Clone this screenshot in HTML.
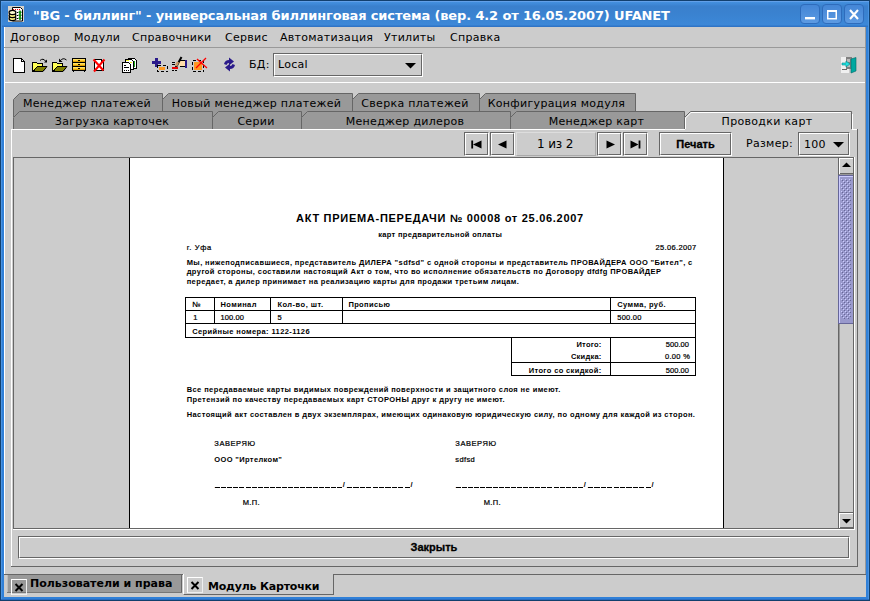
<!DOCTYPE html>
<html lang="ru">
<head>
<meta charset="utf-8">
<title>BG - биллинг</title>
<style>
html,body{margin:0;padding:0;}
body{width:870px;height:601px;overflow:hidden;position:relative;background:#3080d8;font-family:"DejaVu Sans","Liberation Sans",sans-serif;font-size:12px;color:#000;}
body *{position:absolute;box-sizing:border-box;}
.t{white-space:nowrap;line-height:14px;height:14px;font-size:11px;letter-spacing:0.28px;}
.b{font-weight:bold;}
#title{left:0;top:0;width:870px;height:27px;background:linear-gradient(#12406e 0,#12406e 1px,#62a0e8 1px,#62a0e8 2px,#4490de 2px,#3d86d4 5px,#3a80cc 6px,#3a82d0 14px,#3c88d8 25px,#2f74c6 26px,#2f74c6 27px);}
#title .ttl{left:33px;top:8px;font-size:13px;line-height:16px;height:16px;font-weight:bold;color:#fff;letter-spacing:-0.14px;}
.wb{top:4px;width:20px;height:20px;border-radius:4px;background:linear-gradient(#4486d6,#5c9ae2);border:1px solid #2e6cbc;}
#client{left:4px;top:27px;width:862px;height:570px;background:#cccccc;}
.btn{border:1px solid;border-color:#666 #fff #fff #666;background:#ccc;}
.btn::before{content:"";position:absolute;left:0;top:0;right:0;bottom:0;border:1px solid;border-color:#fff #666 #666 #fff;}
.hl{background:#fff;} .dk{background:#666;} .sh{background:#999;}
.tab{height:18px;}
.tab svg{left:0;top:0;}
.tab .t{top:4px;text-align:center;left:0;width:100%;letter-spacing:0.3px;}
#page{left:129px;top:158px;width:595px;height:370px;background:#fff;border-left:1px solid #000;border-right:1px solid #000;font-family:"Liberation Sans",sans-serif;font-weight:bold;font-size:7px;overflow:hidden;}
#page .d{white-space:nowrap;line-height:9px;height:9px;font-size:7.5px;}
#page .ln{background:#000;}
</style>
</head>
<body>

<div id="title"><div class="t ttl">"BG - биллинг" - универсальная биллинговая система (вер. 4.2 от 16.05.2007) UFANET</div>
<div class="wb" style="left:800px"></div>
<div class="wb" style="left:822px"></div>
<div class="wb" style="left:844px"></div>
<svg style="left:800px;top:4px" width="64" height="20" viewBox="0 0 64 20"><rect x="5" y="13" width="10" height="2.4" fill="#fff"/><rect x="27.75" y="7.25" width="8.5" height="7.5" fill="none" stroke="#fff" stroke-width="1.5"/><rect x="27" y="6" width="10" height="2" fill="#fff"/><path d="M50 6 L58 15 M58 6 L50 15" stroke="#fff" stroke-width="2.1" fill="none"/></svg>
</div>
<svg style="left:8px;top:6px" width="16" height="16" viewBox="0 0 16 16"><rect x="0" y="0" width="16" height="16" fill="#d6d2ca"/><path d="M4.5 1.5h8l2 2v11.5h-10z" fill="#fff" stroke="#000" stroke-width="1"/><rect x="5" y="3" width="1" height="1" fill="#f00"/><rect x="7" y="3" width="1" height="1" fill="#f00"/><rect x="9" y="3" width="1" height="1" fill="#f00"/><rect x="11" y="3" width="1" height="1" fill="#f00"/><rect x="9" y="6" width="1" height="1" fill="#000"/><rect x="9" y="9" width="1" height="1" fill="#000"/><rect x="9" y="12" width="1" height="1" fill="#000"/><path d="M12 4.5l1.5 1.7L12 8l-1.5-1.8zM12 7.5l1.5 1.7L12 11l-1.5-1.8zM12 10.500l1.500 1.700L12 14l-1.500-1.800z" fill="#0a0" stroke="#040" stroke-width="0.5"/><ellipse cx="4.500" cy="12.500" rx="3.400" ry="2.200" fill="#f4f080" stroke="#000" stroke-width="1.200"/><ellipse cx="4.500" cy="9.500" rx="3.400" ry="2.200" fill="#f4f080" stroke="#000" stroke-width="1.200"/><ellipse cx="4.500" cy="6.500" rx="3.400" ry="2.200" fill="#fbfbd0" stroke="#000" stroke-width="1.200"/></svg>
<div id="client"></div>
<div style="left:0;top:1px;width:1px;height:600px;background:#12406e"></div><div style="left:1px;top:2px;width:1px;height:598px;background:#4a94e2"></div><div style="left:869px;top:1px;width:1px;height:600px;background:#12406e"></div><div style="left:868px;top:2px;width:1px;height:598px;background:#4a94e2"></div><div style="left:0;top:600px;width:870px;height:1px;background:#12406e"></div><div style="left:1px;top:599px;width:868px;height:1px;background:#2a6cc0"></div>
<div class="hl" style="left:4px;top:27px;width:1px;height:547px"></div>
<div class="sh" style="left:865px;top:27px;width:1px;height:548px"></div>
<div class="t" style="left:10px;top:31px">Договор</div>
<div class="t" style="left:74px;top:31px">Модули</div>
<div class="t" style="left:132px;top:31px">Справочники</div>
<div class="t" style="left:225px;top:31px">Сервис</div>
<div class="t" style="left:280px;top:31px">Автоматизация</div>
<div class="t" style="left:384px;top:31px">Утилиты</div>
<div class="t" style="left:450px;top:31px">Справка</div>
<div class="sh" style="left:4px;top:47px;width:862px;height:1px"></div>
<svg style="left:0;top:50px" width="870" height="30" viewBox="0 50 870 30" shape-rendering="crispEdges">
<!-- new doc -->
<path d="M13.5 58.5H21.5L24.5 61.5V72.5H13.5Z" fill="#fff" stroke="#000"/>
<path d="M21.5 58.5V61.5H24.5" fill="none" stroke="#000"/>
<!-- open folder 1 -->
<g>
<path d="M32.5 71.5V62.5H36.5L37.5 63.5H42.5V66.5H46.5L42.5 71.5Z" fill="#ffff55" stroke="#000"/>
<path d="M37 67H46L42 71H33Z" fill="#808000" stroke="#000" stroke-width="0"/>
<path d="M33 71.5L37.5 66.5H47" fill="none" stroke="#000"/>
<path d="M32 71.5H43L47 66.5" fill="none" stroke="#000" shape-rendering="auto"/>
</g>
<path d="M40 60.5Q43 57.5 46 61.5" fill="none" stroke="#000" shape-rendering="auto"/>
<path d="M44 62.5H47V59.5Z" fill="#000" shape-rendering="auto"/>
<!-- open folder 2 -->
<g transform="translate(20 0)">
<path d="M32.5 71.5V62.5H36.5L37.5 63.5H42.5V66.5H46.5L42.5 71.5Z" fill="#ffff55" stroke="#000"/>
<path d="M37 67H46L42 71H33Z" fill="#808000" stroke="#000" stroke-width="0"/>
<path d="M33 71.5L37.5 66.5H47" fill="none" stroke="#000"/>
<path d="M32 71.5H43L47 66.5" fill="none" stroke="#000" shape-rendering="auto"/>
</g>
<path d="M66.5 60Q63 57 60 61" fill="none" stroke="#000" shape-rendering="auto"/>
<path d="M59 58.5V62H62.5Z" fill="#000" shape-rendering="auto"/>
<!-- drawers -->
<rect x="72.5" y="58.5" width="13" height="12" fill="#ffcc33" stroke="#000"/>
<rect x="73" y="59" width="12" height="1" fill="#ffe066"/><rect x="73" y="63" width="12" height="1" fill="#ffe066"/><rect x="73" y="67" width="12" height="1" fill="#ffe066"/>
<rect x="73" y="61" width="12" height="1" fill="#e0a000"/><rect x="73" y="65" width="12" height="1" fill="#e0a000"/><rect x="73" y="69" width="12" height="1" fill="#e0a000"/>
<rect x="72" y="62" width="14" height="1" fill="#000"/><rect x="72" y="66" width="14" height="1" fill="#000"/>
<rect x="78" y="60" width="2" height="1" fill="#000"/><rect x="78" y="64" width="2" height="1" fill="#000"/><rect x="78" y="68" width="2" height="1" fill="#000"/>
<rect x="73" y="71" width="1" height="1" fill="#000"/><rect x="84" y="71" width="1" height="1" fill="#000"/>
<!-- doc with red X -->
<path d="M94.5 59.5H101.5L103.5 61.5V70.5H94.5Z" fill="#fff" stroke="#000"/>
<path d="M101.5 59.5V61.5H103.5" fill="none" stroke="#000"/>
<path d="M93.5 59.5L103.5 70.5M104.5 59.5L94 71.5" fill="none" stroke="#f00" stroke-width="2" shape-rendering="auto"/>
<!-- copy docs -->
<path d="M128.5 58.5H134.5L136.5 60.5V68.5H128.5Z" fill="#fff" stroke="#000"/>
<rect x="133" y="61" width="2" height="6" fill="#2a2"/>
<path d="M125.5 59.5H131.5L133.5 61.5V69.5H125.5Z" fill="#fff" stroke="#000"/>
<rect x="126" y="60" width="3" height="1" fill="#ee2"/><rect x="130" y="62" width="2" height="1" fill="#ee2"/>
<path d="M122.5 62.5H128.5L130.5 64.5V72.5H122.5Z" fill="#fff" stroke="#000"/>
<rect x="124" y="65" width="2" height="1" fill="#000"/><rect x="124" y="67" width="5" height="1" fill="#000"/><rect x="124" y="70" width="1" height="1" fill="#000"/><rect x="126" y="70" width="1" height="1" fill="#000"/><rect x="128" y="70" width="1" height="1" fill="#000"/>
<!-- plus -->
<rect x="155" y="58" width="3" height="9" fill="#2a1a8a"/><rect x="152" y="61" width="9" height="3" fill="#2a1a8a"/>
<rect x="157.5" y="65.5" width="10" height="6" fill="none" stroke="#000" stroke-dasharray="3 2"/>
<rect x="159" y="67" width="6" height="3" fill="#ff9922"/>
<!-- hand edit -->
<rect x="185" y="60" width="2" height="8" fill="#2a1a8a"/>
<rect x="179" y="61" width="6" height="5" fill="#ffddaa"/><rect x="179" y="60" width="6" height="1" fill="#000"/><rect x="180" y="66" width="5" height="1" fill="#000"/>
<path d="M181.5 57L175.5 68" stroke="#000" stroke-width="2" shape-rendering="auto"/>
<path d="M178 62L176 66" stroke="#c96" stroke-width="2.5" shape-rendering="auto"/>
<rect x="172" y="67" width="6" height="2" fill="#e00"/>
<rect x="172" y="62" width="3" height="1" fill="#000"/><rect x="172" y="64" width="3" height="1" fill="#000"/><rect x="172" y="70" width="2" height="1" fill="#000"/><rect x="175" y="70" width="2" height="1" fill="#000"/>
<!-- delete rect -->
<rect x="192.5" y="60.5" width="11" height="11" fill="none" stroke="#000" stroke-dasharray="3 2"/>
<rect x="194" y="62" width="8" height="8" fill="#ff9922"/>
<path d="M197 59L207 68M206 58L196 68" stroke="#f00" stroke-width="1.3" fill="none" shape-rendering="auto"/>
<!-- refresh arrows -->
<g fill="#2a1a8a" shape-rendering="auto">
<path d="M224 64Q225 60 229 60V57.5L234 61.5L229 65.5V63Q227 63 226.5 65Z"/>
<path d="M235 65Q234 69 230 69V71.5L225 67.5L230 63.5V66Q232 66 232.5 64Z"/>
</g>
<!-- exit -->
<rect x="841" y="57" width="8" height="16" fill="#f0f0f0"/>
<path d="M846 57H852V69H846Z" fill="#808080"/>
<rect x="847" y="59" width="3" height="3" fill="#bbb"/><rect x="847" y="64" width="3" height="3" fill="#bbb"/>
<path d="M851 59L856 57.5V71L851 73Z" fill="#00a8a0" shape-rendering="auto"/>
<path d="M851 59L856 57.5V71L851 73Z" fill="none" stroke="#066" stroke-width="0.6" shape-rendering="auto"/>
<path d="M842 63H846V61L850 64L846 67V65H842Z" fill="#22e0e0" stroke="#088" stroke-width="0.6" shape-rendering="auto"/>
<rect x="842" y="69" width="5" height="1" fill="#666"/>
</svg>

<div class="t" style="left:249px;top:58px">БД:</div>
<div class="btn" style="left:273px;top:53px;width:150px;height:24px"><div class="t" style="left:4px;top:4px">Local</div><svg style="left:131px;top:9px" width="12" height="6"><path d="M0 0h11l-5.5 5.5z" fill="#000"/></svg></div>
<div class="hl" style="left:5px;top:82px;width:860px;height:1px"></div>
<div class="dk" style="left:4px;top:574px;width:862px;height:1px"></div>
<div class="tab" style="left:13px;top:93px;width:150px;height:24px"><svg width="150" height="24" viewBox="0 0 150 24"><path d="M0.5 24 V6.5 L6.5 0.5 H149.5 V24" fill="#999" stroke="#666" stroke-width="1"/></svg><div class="t" style="left:-1px">Менеджер платежей</div></div>
<div class="tab" style="left:162px;top:93px;width:191px;height:24px"><svg width="191" height="24" viewBox="0 0 191 24"><path d="M0.5 24 V6.5 L6.5 0.5 H190.5 V24" fill="#999" stroke="#666" stroke-width="1"/></svg><div class="t" style="left:-1px">Новый менеджер платежей</div></div>
<div class="tab" style="left:352px;top:93px;width:128px;height:24px"><svg width="128" height="24" viewBox="0 0 128 24"><path d="M0.5 24 V6.5 L6.5 0.5 H127.5 V24" fill="#999" stroke="#666" stroke-width="1"/></svg><div class="t" style="left:-1px">Сверка платежей</div></div>
<div class="tab" style="left:479px;top:93px;width:157px;height:24px"><svg width="157" height="24" viewBox="0 0 157 24"><path d="M0.5 24 V6.5 L6.5 0.5 H156.5 V24" fill="#999" stroke="#666" stroke-width="1"/></svg><div class="t" style="left:-1px">Конфигурация модуля</div></div>
<div class="tab" style="left:13px;top:111px;width:200px;height:18px"><svg width="200" height="18" viewBox="0 0 200 18"><path d="M0.5 18 V6.5 L6.5 0.5 H199.5 V18" fill="#999" stroke="#666" stroke-width="1"/></svg><div class="t" style="left:-1px">Загрузка карточек</div></div>
<div class="tab" style="left:212px;top:111px;width:90px;height:18px"><svg width="90" height="18" viewBox="0 0 90 18"><path d="M0.5 18 V6.5 L6.5 0.5 H89.5 V18" fill="#999" stroke="#666" stroke-width="1"/></svg><div class="t" style="left:-1px">Серии</div></div>
<div class="tab" style="left:301px;top:111px;width:210px;height:18px"><svg width="210" height="18" viewBox="0 0 210 18"><path d="M0.5 18 V6.5 L6.5 0.5 H209.5 V18" fill="#999" stroke="#666" stroke-width="1"/></svg><div class="t" style="left:-1px">Менеджер дилеров</div></div>
<div class="tab" style="left:510px;top:111px;width:175px;height:18px"><svg width="175" height="18" viewBox="0 0 175 18"><path d="M0.5 18 V6.5 L6.5 0.5 H174.5 V18" fill="#999" stroke="#666" stroke-width="1"/></svg><div class="t" style="left:-1px">Менеджер карт</div></div>
<div class="tab" style="left:684px;top:111px;width:168px;height:18px"><svg width="168" height="18" viewBox="0 0 168 18"><path d="M0.5 18 V6.5 L6.5 0.5 H167.5 V18" fill="#ccc" stroke="#666" stroke-width="1"/><path d="M1.5 18 V7 L7 1.5 H166.5" fill="none" stroke="#fff" stroke-width="1"/></svg><div class="t" style="left:-1px">Проводки карт</div></div>
<div class="hl" style="left:852px;top:114px;width:1px;height:16px"></div>
<div class="hl" style="left:11px;top:129px;width:674px;height:1px"></div>
<div class="hl" style="left:852px;top:129px;width:5px;height:1px"></div>
<div class="hl" style="left:11px;top:129px;width:1px;height:437px"></div>
<div class="dk" style="left:857px;top:129px;width:1px;height:438px"></div>
<div class="dk" style="left:11px;top:566px;width:847px;height:1px"></div>
<div class="btn" style="left:464px;top:132px;width:25px;height:24px"></div>
<div class="btn" style="left:490px;top:132px;width:25px;height:24px"></div>
<div class="btn" style="left:597px;top:132px;width:25px;height:24px"></div>
<div class="btn" style="left:623px;top:132px;width:25px;height:24px"></div>
<svg style="left:460px;top:132px" width="200" height="24" viewBox="460 132 200 24"><rect x="471.3" y="140.5" width="1.8" height="8" fill="#000"/><path d="M481.5 140.5v8l-8.5-4z" fill="#000"/><path d="M506.5 140.5v8l-8.5-4z" fill="#000"/><path d="M606.5 140.5v8l8.5-4z" fill="#000"/><path d="M630.5 140.5v8l8-4z" fill="#000"/><rect x="638.6" y="140.5" width="1.8" height="8" fill="#000"/></svg>
<div style="left:516px;top:132px;width:80px;height:24px;border:1px solid;border-color:#ddd #aaa #aaa #ddd"></div>
<div class="t" style="left:537px;top:137px;font-size:12px;letter-spacing:-0.15px">1 из 2</div>
<div class="btn" style="left:659px;top:132px;width:73px;height:24px"><div class="t b" style="left:0;width:100%;text-align:center;top:4px;font-family:'Liberation Sans',sans-serif;font-size:11px;letter-spacing:0;-webkit-text-stroke:0.3px #000">Печать</div></div>
<div class="t" style="left:746px;top:137px">Размер:</div>
<div class="btn" style="left:798px;top:132px;width:52px;height:24px"><div class="t" style="left:5px;top:5px">100</div><svg style="left:34px;top:9px" width="11" height="6"><path d="M0 0h11l-5.5 5.5z" fill="#000"/></svg></div>
<div class="dk" style="left:13px;top:157px;width:841px;height:1px"></div>
<div class="dk" style="left:13px;top:157px;width:1px;height:372px"></div>
<div class="dk" style="left:14px;top:528px;width:840px;height:1px"></div>
<div class="hl" style="left:13px;top:529px;width:842px;height:1px"></div>
<div class="hl" style="left:854px;top:157px;width:1px;height:373px"></div>
<div class="dk" style="left:838px;top:158px;width:1px;height:370px"></div>
<div class="dk" style="left:853px;top:158px;width:1px;height:370px"></div>
<div class="hl" style="left:839px;top:158px;width:14px;height:1px"></div><div class="hl" style="left:839px;top:158px;width:1px;height:16px"></div>
<svg style="left:842px;top:162px" width="9" height="5"><path d="M0 5h9l-4.5-4.5z" fill="#000"/></svg>
<div class="dk" style="left:840px;top:173px;width:13px;height:1px"></div>
<div class="sh" style="left:839px;top:174px;width:14px;height:1px"></div>
<div style="left:838px;top:175px;width:15px;height:149px;background:#9999cc;border:1px solid #666699;border-right:none"></div>
<div style="left:839px;top:176px;width:14px;height:147px;border-left:1px solid #ccccff;border-top:1px solid #ccccff"></div>
<svg style="left:841px;top:179px" width="10" height="140" shape-rendering="crispEdges"><defs><pattern id="dp" width="4" height="4" patternUnits="userSpaceOnUse"><rect x="0" y="0" width="1" height="1" fill="#ccccff"/><rect x="1" y="1" width="1" height="1" fill="#666699"/><rect x="2" y="2" width="1" height="1" fill="#ccccff"/><rect x="3" y="3" width="1" height="1" fill="#666699"/></pattern></defs><rect width="10" height="140" fill="url(#dp)"/></svg>
<div class="sh" style="left:839px;top:324px;width:1px;height:189px"></div>
<div class="dk" style="left:839px;top:512px;width:14px;height:1px"></div>
<div class="hl" style="left:839px;top:513px;width:14px;height:1px"></div><div class="hl" style="left:839px;top:513px;width:1px;height:15px"></div>
<div class="dk" style="left:840px;top:527px;width:13px;height:1px"></div>
<svg style="left:842px;top:519px" width="9" height="5"><path d="M0 0h9l-4.5 4.5z" fill="#000"/></svg>
<div id="page">
<div class="d" style="left:0;width:620px;text-align:center;top:54px;font-size:11px;line-height:12px;height:12px;letter-spacing:0.72px">АКТ ПРИЕМА-ПЕРЕДАЧИ № 00008 от 25.06.2007</div>
<div class="d" style="left:56.7px;top:85.02px;letter-spacing:0.701px;font-weight:normal;-webkit-text-stroke:0.22px #000">г. Уфа</div>
<div class="d" style="left:525.4px;top:85.02px;letter-spacing:0.374px;font-weight:normal;-webkit-text-stroke:0.22px #000">25.06.2007</div>
<div class="d" style="left:56.7px;top:99.62px;letter-spacing:0.401px">Мы, нижеподписавшиеся, представитель ДИЛЕРА &quot;sdfsd&quot; с одной стороны и представитель ПРОВАЙДЕРА ООО &quot;Бител&quot;, с</div>
<div class="d" style="left:56.7px;top:109.22px;letter-spacing:0.425px">другой стороны, составили настоящий Акт о том, что во исполнение обязательств по Договору dfdfg ПРОВАЙДЕР</div>
<div class="d" style="left:56.7px;top:119.02px;letter-spacing:0.392px">передает, а дилер принимает на реализацию карты для продажи третьим лицам.</div>
<div class="d" style="left:62.5px;top:141.62px;letter-spacing:0.000px">№</div>
<div class="d" style="left:90.5px;top:141.62px;letter-spacing:0.396px">Номинал</div>
<div class="d" style="left:147.4px;top:141.62px;letter-spacing:0.486px">Кол-во, шт.</div>
<div class="d" style="left:218.4px;top:141.62px;letter-spacing:0.360px">Прописью</div>
<div class="d" style="left:487.2px;top:141.62px;letter-spacing:0.420px">Сумма, руб.</div>
<div class="d" style="left:63.2px;top:154.82px;letter-spacing:0.000px;font-weight:normal;-webkit-text-stroke:0.22px #000">1</div>
<div class="d" style="left:90.5px;top:154.82px;letter-spacing:0.112px;font-weight:normal;-webkit-text-stroke:0.22px #000">100.00</div>
<div class="d" style="left:147.4px;top:154.82px;letter-spacing:0.000px;font-weight:normal;-webkit-text-stroke:0.22px #000">5</div>
<div class="d" style="left:487.2px;top:154.82px;letter-spacing:0.272px;font-weight:normal;-webkit-text-stroke:0.22px #000">500.00</div>
<div class="d" style="left:62.2px;top:169.02px;letter-spacing:0.389px">Серийные номера: 1122-1126</div>
<div class="d" style="left:446.5px;top:182.32px;letter-spacing:0.230px">Итого:</div>
<div class="d" style="left:535.7px;top:182.32px;letter-spacing:0.072px;font-weight:normal;-webkit-text-stroke:0.22px #000">500.00</div>
<div class="d" style="left:440.9px;top:194.02px;letter-spacing:0.239px">Скидка:</div>
<div class="d" style="left:535.0px;top:194.02px;letter-spacing:0.290px;font-weight:normal;-webkit-text-stroke:0.22px #000">0.00 %</div>
<div class="d" style="left:398.7px;top:207.62px;letter-spacing:0.368px">Итого со скидкой:</div>
<div class="d" style="left:535.7px;top:207.62px;letter-spacing:0.072px;font-weight:normal;-webkit-text-stroke:0.22px #000">500.00</div>
<div class="d" style="left:56.7px;top:227.42px;letter-spacing:0.406px">Все передаваемые карты видимых повреждений поверхности и защитного слоя не имеют.</div>
<div class="d" style="left:56.7px;top:236.52px;letter-spacing:0.440px">Претензий по качеству передаваемых карт СТОРОНЫ друг к другу не имеют.</div>
<div class="d" style="left:56.7px;top:252.02px;letter-spacing:0.413px">Настоящий акт составлен в двух экземплярах, имеющих одинаковую юридическую силу, по одному для каждой из сторон.</div>
<div class="d" style="left:84.3px;top:280.82px;letter-spacing:0.572px;font-weight:normal;-webkit-text-stroke:0.22px #000">ЗАВЕРЯЮ</div>
<div class="d" style="left:325.3px;top:280.82px;letter-spacing:0.572px;font-weight:normal;-webkit-text-stroke:0.22px #000">ЗАВЕРЯЮ</div>
<div class="d" style="left:84.3px;top:297.02px;letter-spacing:0.364px">ООО &quot;Иртелком&quot;</div>
<div class="d" style="left:325.3px;top:297.02px;letter-spacing:0.393px;font-weight:normal;-webkit-text-stroke:0.22px #000">sdfsd</div>
<div class="d" style="left:112.7px;top:340.42px;letter-spacing:0.398px;font-weight:normal;-webkit-text-stroke:0.22px #000">М.П.</div>
<div class="d" style="left:353.7px;top:340.42px;letter-spacing:0.398px;font-weight:normal;-webkit-text-stroke:0.22px #000">М.П.</div>
<div class="d" style="left:248.2px;top:72.22px;letter-spacing:0.326px">карт предварительной оплаты</div>
<div class="ln" style="left:55px;top:139px;width:511px;height:1px"></div>
<div class="ln" style="left:55px;top:152px;width:511px;height:1px"></div>
<div class="ln" style="left:55px;top:165px;width:511px;height:1px"></div>
<div class="ln" style="left:55px;top:179px;width:511px;height:1px"></div>
<div class="ln" style="left:55px;top:139px;width:1px;height:41px"></div>
<div class="ln" style="left:565px;top:139px;width:1px;height:79px"></div>
<div class="ln" style="left:84px;top:139px;width:1px;height:27px"></div>
<div class="ln" style="left:140px;top:139px;width:1px;height:27px"></div>
<div class="ln" style="left:212px;top:139px;width:1px;height:27px"></div>
<div class="ln" style="left:480px;top:139px;width:1px;height:27px"></div>
<div class="ln" style="left:381px;top:204px;width:185px;height:1px"></div>
<div class="ln" style="left:381px;top:217px;width:185px;height:1px"></div>
<div class="ln" style="left:381px;top:179px;width:1px;height:39px"></div>
<div class="ln" style="left:480px;top:179px;width:1px;height:39px"></div>
<div class="d" style="left:84.6px;top:321.92px;letter-spacing:1.93px">_____________________/<span style="position:static;letter-spacing:2.2px">__________</span>/</div>
<div style="left:85px;top:329px;width:128px;height:1px;background:repeating-linear-gradient(90deg,#000 0,#000 5px,#fff 5px,#fff 6.1px)"></div>
<div style="left:217px;top:329px;width:64px;height:1px;background:repeating-linear-gradient(90deg,#000 0,#000 5.3px,#fff 5.3px,#fff 6.4px)"></div>
<div class="d" style="left:325.6px;top:321.92px;letter-spacing:1.93px">_____________________/<span style="position:static;letter-spacing:2.2px">__________</span>/</div>
<div style="left:326px;top:329px;width:128px;height:1px;background:repeating-linear-gradient(90deg,#000 0,#000 5px,#fff 5px,#fff 6.1px)"></div>
<div style="left:458px;top:329px;width:64px;height:1px;background:repeating-linear-gradient(90deg,#000 0,#000 5.3px,#fff 5.3px,#fff 6.4px)"></div>
</div>
<div class="btn" style="left:18px;top:536px;width:832px;height:23px"><div class="t b" style="left:0;width:100%;text-align:center;top:3px;font-family:'Liberation Sans',sans-serif;font-size:11px;letter-spacing:0;-webkit-text-stroke:0.3px #000">Закрыть</div></div>
<div class="sh" style="left:7px;top:575px;width:175px;height:18px"></div>
<div style="left:7px;top:575px;width:1px;height:18px;background:#bbb"></div>
<div class="dk" style="left:181px;top:575px;width:1px;height:18px"></div>
<div style="left:7px;top:592px;width:175px;height:1px;background:#777"></div>
<div style="left:183px;top:574px;width:151px;height:21px;background:#ccc;border-left:1px solid #fff;border-right:1px solid #666;border-bottom:1px solid #666"></div>
<div style="left:11px;top:579px;width:16px;height:16px;border:1px solid;border-color:#fff #eee #eee #fff"><svg style="left:2px;top:3px" width="10" height="9"><path d="M1.5 1l7 7M8.5 1l-7 7" stroke="#000" stroke-width="2" fill="none"/></svg></div>
<div style="left:187px;top:577px;width:16px;height:16px;border:1px solid;border-color:#fff #eee #eee #fff"><svg style="left:2px;top:3px" width="10" height="9"><path d="M1.5 1l7 7M8.5 1l-7 7" stroke="#000" stroke-width="2" fill="none"/></svg></div>
<div class="t b" style="left:30px;top:577px;font-size:11px;letter-spacing:0">Пользователи и права</div>
<div class="t b" style="left:208px;top:580px;font-size:11px;letter-spacing:-0.2px">Модуль Карточки</div>
</body>
</html>
